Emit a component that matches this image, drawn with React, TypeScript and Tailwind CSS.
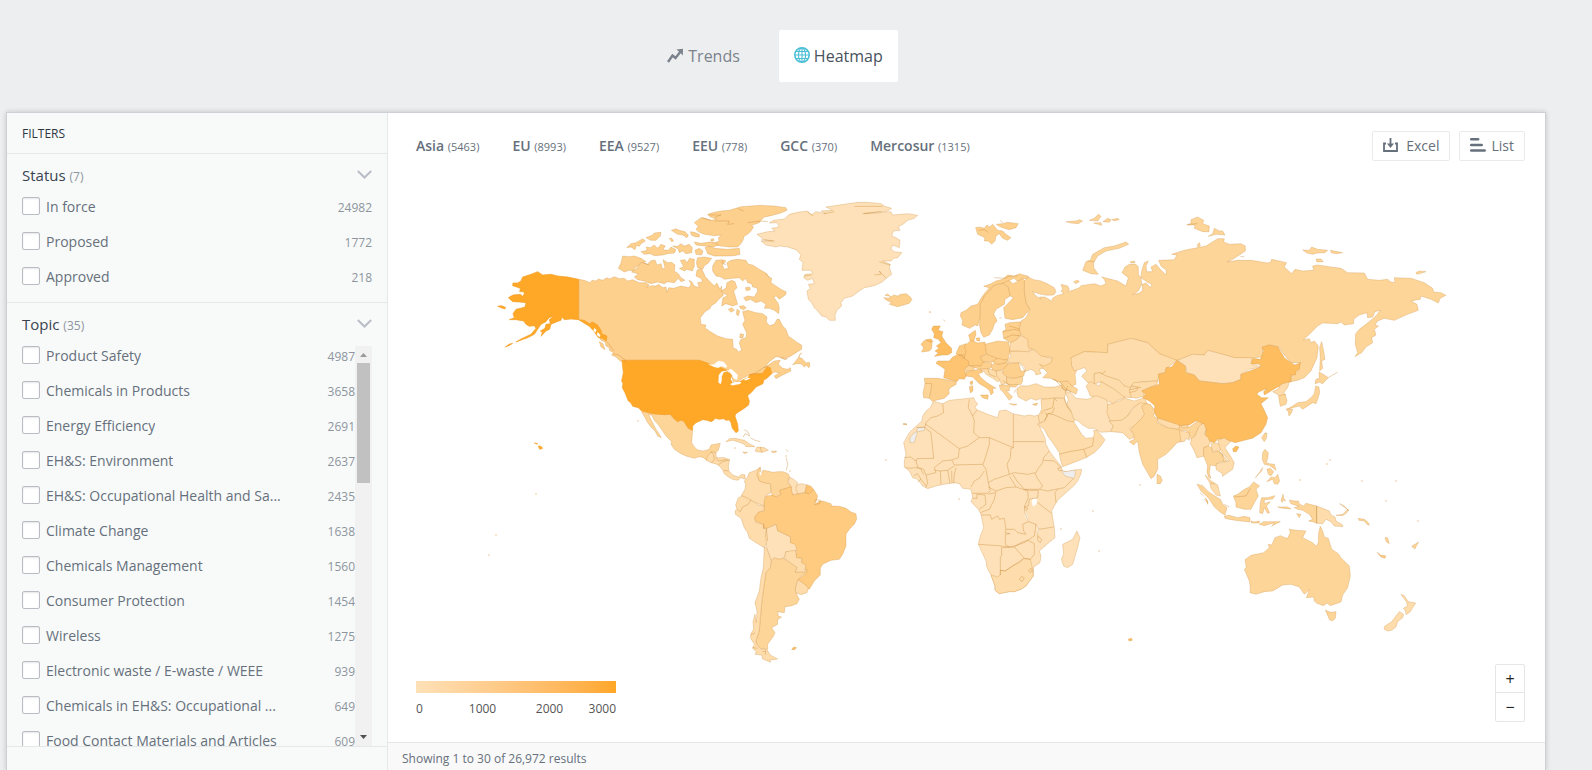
import React, { useState } from 'react';

const REGIONS = [
  { name: 'Asia', count: 5463 },
  { name: 'EU', count: 8993 },
  { name: 'EEA', count: 9527 },
  { name: 'EEU', count: 778 },
  { name: 'GCC', count: 370 },
  { name: 'Mercosur', count: 1315 },
];

interface Option {
  label: string;
  count: number;
}

const STATUSES: Option[] = [
  { label: 'In force', count: 24982 },
  { label: 'Proposed', count: 1772 },
  { label: 'Approved', count: 218 },
];

const TOPICS: Option[] = [
  { label: 'Product Safety', count: 4987 },
  { label: 'Chemicals in Products', count: 3658 },
  { label: 'Energy Efficiency', count: 2691 },
  { label: 'EH&S: Environment', count: 2637 },
  { label: 'EH&S: Occupational Health and Sa...', count: 2435 },
  { label: 'Climate Change', count: 1638 },
  { label: 'Chemicals Management', count: 1560 },
  { label: 'Consumer Protection', count: 1454 },
  { label: 'Wireless', count: 1275 },
  { label: 'Electronic waste / E-waste / WEEE', count: 939 },
  { label: 'Chemicals in EH&S: Occupational ...', count: 649 },
  { label: 'Food Contact Materials and Articles', count: 609 },
];

// heat scale, from few to many regulations
const H0 = '#fee1b8';
const H1 = '#fedcab';
const H2 = '#fed599';
const H3 = '#fed08d';
const H4 = '#fecb80';
const H45 = '#fec472';
const H5 = '#febd5f';
const H6 = '#ffa726';
const NONE = '#eeeeee';
const SEA = '#ffffff';

interface Sheet {
  x: number;
  y: number;
  land: [string, string][];
  borders?: string[];
}

// Every sheet is drawn at three times the map's scale, from its own corner.
const SHEETS: Sheet[] = [
  // North America
  {
    x: 480,
    y: 190,
    land: [
      [H3, '293,265 310,268 327,275 333,268 345,270 352,264 365,268 378,260 386,264 400,257 415,263 430,262 440,270 455,266 475,275 495,275 505,282 497,289 512,284 525,285 533,280 545,290 555,288 558,304 563,290 578,292 600,285 625,290 630,278 624,268 632,272 640,285 655,290 650,275 665,272 660,262 645,255 648,238 660,232 668,245 672,256 690,275 700,285 708,276 717,295 722,285 722,300 728,312 712,326 705,335 690,345 688,352 672,362 658,380 660,400 675,402 672,410 685,420 710,435 735,443 755,445 757,472 766,474 772,483 782,478 775,455 780,445 795,440 797,425 785,400 792,388 788,375 785,362 800,358 825,365 845,368 858,378 856,392 865,404 880,400 888,385 895,385 905,405 915,415 922,435 950,455 962,462 962,475 945,485 925,498 910,500 885,497 865,512 850,530 865,520 880,510 898,508 892,520 905,532 920,535 928,530 930,540 905,552 885,563 880,555 896,545 880,543 872,548 850,550 830,548 805,552 785,562 760,578 752,560 745,540 735,535 700,528 685,520 655,508 435,508 432,517 415,508 405,498 392,492 398,485 385,478 385,470 375,465 372,452 360,448 355,438 345,430 345,420 330,405 310,395 293,385'],
      [H3, '962,485 952,500 935,522 945,518 960,518 970,528 978,522 982,530 987,526 985,514 975,516 972,512 963,502 955,500 955,492'],
      [H3, '640,95 660,80 672,82 690,88 708,84 688,78 680,70 700,64 720,60 745,58 765,52 780,47 810,45 840,43 880,45 915,50 918,58 900,66 870,74 850,78 840,88 835,95 812,103 818,108 810,120 800,130 790,135 785,150 778,160 770,168 745,168 720,165 700,162 680,155 700,155 715,150 712,140 722,132 700,134 670,130 655,124 645,115 652,106'],
      [H3, '672,170 685,165 700,172 740,175 775,172 777,190 760,194 740,195 700,195 680,188 676,178'],
      [H3, '425,195 445,197 460,195 480,202 495,212 478,216 475,222 460,230 458,240 445,238 430,243 412,232 420,216'],
      [H3, '470,228 482,214 500,220 508,210 522,207 528,222 540,218 545,235 552,230 546,206 560,215 572,214 582,222 580,240 592,248 600,260 612,268 600,272 592,262 580,275 560,272 550,278 530,273 510,278 490,270 470,266 460,258 472,248 452,243'],
      [H3, '480,182 498,178 496,168 508,170 520,162 530,172 540,160 553,165 545,176 562,178 570,168 585,176 580,186 560,188 545,192 520,194 508,188 490,190'],
      [H3, '437,170 450,158 465,155 485,143 493,150 480,158 475,166 466,163 462,176 450,168'],
      [H3, '571,118 585,113 595,118 612,122 622,132 618,140 605,132 590,130'],
      [H3, '628,122 640,124 655,130 655,138 642,137 632,133'],
      [H3, '575,165 590,166 600,158 610,165 625,160 634,170 632,185 615,188 605,180 595,185 592,174'],
      [H3, '640,153 660,157 690,153 712,160 700,168 672,165 645,162'],
      [H3, '495,140 515,132 520,126 540,124 538,135 525,148 510,148'],
      [H3, '642,178 655,172 666,180 662,192 645,190'],
      [H3, '598,208 612,206 618,215 626,202 640,205 640,225 634,240 618,235 610,240 595,232 608,228'],
      [H3, '650,200 670,198 692,202 680,218 672,222 665,235 650,230 646,215'],
      [H3, '565,142 572,142 578,150 572,152'],
      [H3, '690,145 698,143 698,150 690,150'],
      [H3, '695,225 705,208 722,206 735,210 724,222 730,235 742,232 738,215 750,208 770,205 795,208 802,220 815,222 835,235 858,248 860,256 872,262 870,275 885,285 902,296 915,302 915,310 905,318 895,325 886,315 878,318 892,338 895,352 893,368 880,358 865,352 850,352 855,340 840,330 825,335 808,325 795,330 788,320 800,315 820,318 830,300 828,290 815,288 812,278 800,275 795,262 785,270 775,260 755,262 730,265 720,258 705,255 695,240'],
      [H3, '720,300 735,292 738,275 752,268 762,272 768,290 758,300 770,340 755,345 735,338 722,345 726,320 740,315'],
      [H3, '742,355 752,350 760,358 750,364'],
      [H3, '775,346 788,344 796,350 788,356 778,352'],
      [H3, '768,355 776,360 772,375 766,370'],
      [H3, '793,290 806,288 808,296 796,299'],
      [H3, '778,428 788,430 786,440 776,440'],
      [H3, '355,452 366,458 372,476 360,468'],
      [H3, '898,500 920,503 912,506'],
      [H2, '482,662 515,668 550,671 568,670 580,685 590,692 600,688 610,692 622,712 635,718 632,755 640,768 650,777 668,780 685,775 690,762 718,757 712,778 705,785 690,783 688,795 676,808 668,800 655,797 640,802 615,795 600,788 580,775 570,760 572,752 555,735 545,720 535,705 520,688 512,672 503,671 512,690 525,715 534,728 541,740 530,735 522,720 510,708 500,695 492,680'],
      [H1, '690,783 705,785 706,800 730,800 746,806 742,825 744,840 755,852 772,858 782,850 792,852 793,865 780,860 770,868 755,865 742,858 730,848 724,835 712,822 702,818 690,815 676,808 680,795'],
      [H1, '735,752 745,743 762,742 790,748 805,758 822,767 795,767 790,760 770,752 755,748'],
      [H1, '822,780 828,768 850,770 862,778 845,784 832,783'],
      [H1, '785,783 800,784 792,788'],
      [H1, '872,780 886,782 875,786'],
      [H6, '423,508 655,508 685,518 705,528 720,530 738,538 724,540 715,552 712,575 718,580 723,568 722,555 728,545 740,542 752,552 748,565 755,575 775,572 800,560 808,550 845,547 858,528 868,530 872,548 860,560 848,568 846,578 825,588 815,600 805,610 808,600 800,615 805,630 803,642 790,652 765,668 762,675 770,700 772,720 765,725 754,712 750,695 745,687 735,688 728,683 715,685 702,682 698,688 690,692 678,688 665,686 645,695 635,705 635,718 622,712 608,690 598,688 590,692 580,684 568,670 550,671 515,668 482,660 472,650 455,646 450,636 442,630 432,605 424,590 426,578 422,570 427,545'],
      [H6, '293,265 293,386 270,384 250,386 243,378 240,388 228,392 210,400 206,415 195,420 180,436 184,424 178,420 192,412 195,400 208,398 205,386 218,376 204,380 195,392 180,400 170,415 160,430 140,440 105,453 120,444 150,430 165,412 160,404 145,406 135,400 128,390 105,386 85,386 100,380 96,368 105,355 118,352 132,348 135,335 115,333 95,332 82,320 96,312 118,310 125,316 130,308 128,302 116,302 118,292 95,284 96,276 110,276 120,270 125,258 150,250 170,242 185,252 210,250 230,255 260,258'],
      [H6, '293,386 310,388 325,398 335,393 350,402 360,418 362,428 378,435 376,450 364,442 352,440 340,422 325,406'],
      [H6, '50,346 62,344 75,350 70,354 60,350'],
      [H6, '73,468 84,460 95,457 84,464'],
      [H6, '172,765 180,766 185,772 176,775'],
      [H6, '160,756 170,758 168,760'],
      [SEA, '683,520 698,521 712,510 728,513 738,525 735,530 722,525 712,530 700,528'],
      [SEA, '714,552 722,542 727,545 722,556 720,578 713,574'],
      [SEA, '742,538 750,534 760,542 770,552 768,566 758,562 752,550'],
      [SEA, '748,580 760,573 780,573 778,578 755,583'],
      [SEA, '790,566 800,560 808,562 795,568'],
      [SEA, '340,412 346,416 344,424 338,420'],
      [SEA, '350,424 358,432 356,438 348,432'],
    ],
    borders: [
      '376,452 386,462 392,472 400,480',
      '395,488 412,492 430,505 436,515',
      '805,552 825,545 848,530 862,525',
      '705,800 712,810 735,806 746,808',
      '690,783 698,790 700,806 692,815',
      '712,822 725,812 740,808',
      '728,838 742,840',
      '790,716 800,722 806,735 792,728 787,738',
      '808,740 822,748 838,752',
      '838,768 842,784',
      '682,72 720,72 700,80',
      '700,90 745,90 740,100 760,98',
      '800,95 840,90 860,92',
      '662,80 690,88',
      '770,52 788,60',
      '735,222 722,215 728,206',
      '486,215 505,222',
      '855,250 866,258',
      '915,775 922,783',
    ],
  },
  // Greenland and Iceland
  {
    x: 700,
    y: 190,
    land: [
      [H0, '168,130 200,122 222,120 212,112 235,108 228,95 205,96 218,88 250,84 265,70 290,64 320,60 330,72 345,62 375,68 360,60 395,58 375,48 430,40 470,34 500,34 540,38 552,46 572,52 560,60 490,68 530,66 570,62 575,72 600,70 620,68 650,73 640,82 620,88 610,97 592,108 597,118 577,120 572,135 585,140 597,148 595,170 575,162 570,174 580,182 603,185 590,200 578,202 570,210 545,210 568,220 565,228 572,250 556,262 545,272 520,284 490,290 475,300 455,315 430,322 420,335 422,345 408,358 402,372 403,388 385,388 375,378 362,375 350,360 340,350 332,335 322,325 318,300 328,292 322,280 340,278 335,262 320,268 308,260 312,250 335,248 330,238 303,238 306,215 295,205 300,192 285,176 260,168 235,165 225,168 195,162 180,150 220,150 190,146'],
      [H3, '548,320 565,322 568,316 552,313 560,309 570,318 578,312 590,315 600,310 615,308 625,315 633,325 625,337 608,342 590,347 565,340 572,332 560,330'],
      [H3, '824,110 835,108 850,112 858,102 866,108 875,100 890,118 905,120 915,130 930,140 920,148 905,142 895,128 885,135 882,150 872,160 862,150 850,150 852,140 830,130'],
      [H3, '886,100 905,98 920,94 952,98 945,110 925,116 905,110 895,106'],
      [H2, '606,700 614,698 618,702'],
    ],
    borders: ['730,718 738,730 752,738', '535,212 552,218 568,222', '520,252 540,250 535,240 556,262', '310,255 332,252', '320,64 338,75', '484,68 540,62', '370,68 400,62', '832,118 850,116 862,124', '898,88 906,96', '460,46 545,46', '180,146 214,150'],
  },
  // South America
  {
    x: 600,
    y: 430,
    land: [
      [H1, '430,150 438,142 445,125 465,118 478,108 476,118 468,130 475,150 492,155 508,158 510,185 492,195 494,210 490,225 455,212 436,200 420,195 432,175 434,160'],
      [H2, '478,110 480,130 486,118 500,120 515,124 530,122 545,122 555,125 563,130 566,140 560,150 572,170 552,173 537,178 540,190 525,198 513,194 508,158 490,155 475,150 468,130 472,118'],
      [H0, '566,138 578,145 590,155 585,170 592,188 575,192 570,178 572,168 562,155'],
      [H0, '590,160 604,158 617,162 612,185 590,188 585,172'],
      [H45, '617,161 630,166 638,176 625,188 612,186'],
      [H1, '412,200 425,195 450,207 440,222 425,228 418,243 408,235 404,222'],
      [H1, '403,238 410,236 418,243 425,228 440,222 450,207 472,222 490,225 490,238 472,244 461,260 465,275 488,280 487,292 498,292 494,310 500,330 490,350 465,335 445,322 440,305 430,290 420,262 403,250'],
      [H4, '495,195 513,193 528,198 540,190 536,178 555,172 570,167 572,180 575,192 590,189 612,186 625,188 638,175 650,195 645,212 640,222 655,210 665,210 690,218 692,225 715,226 735,232 750,243 765,248 767,265 760,280 745,295 735,310 735,345 725,370 715,385 690,388 665,400 658,412 658,432 640,450 625,475 615,468 600,452 590,445 605,435 617,425 612,410 602,395 602,382 585,380 587,350 568,335 568,318 548,308 530,300 525,280 500,292 487,292 488,280 465,272 461,260 472,244 490,240 490,210'],
      [H0, '498,292 525,280 530,300 548,308 568,318 568,335 582,340 587,352 583,362 555,362 548,382 535,385 520,380 510,388 504,370 497,350 494,310'],
      [H1, '555,362 583,358 587,380 602,382 602,395 615,402 610,424 582,424 588,410 550,382'],
      [H1, '590,447 605,455 622,470 618,485 600,491 585,486 582,475'],
      [H2, '512,388 520,382 535,385 548,382 588,410 582,424 610,424 618,415 617,425 600,435 588,450 582,478 588,492 595,505 588,518 570,525 552,527 550,545 530,542 532,556 542,558 530,566 530,580 512,590 522,605 518,615 500,640 500,655 478,652 468,640 465,630 475,600 478,560 484,500 490,460 495,425 508,410'],
      [H1, '490,348 497,352 504,370 510,388 508,410 495,425 490,460 484,500 478,560 475,600 465,630 468,642 480,654 498,656 508,672 530,684 505,688 510,694 485,684 482,672 462,670 466,662 455,652 460,640 448,620 452,604 458,595 456,572 462,550 466,575 468,540 462,515 475,480 480,440 487,410'],
      [H5, '572,656 578,648 587,650 580,656'],
      [SEA, '476,124 481,124 480,132 477,132'],
    ],
    borders: ['638,212 645,206 658,208 656,218 642,220', '496,294 500,330', '485,662 495,660 492,672', '556,80 560,100 556,118', '520,60 528,62', '448,612 462,606', '454,650 470,652', '488,280 490,292'],
  },
  // Africa
  {
    x: 880,
    y: 260,
    land: [
      [H0, '155,425 162,422 185,428 205,418 235,415 278,410 282,420 290,428 282,440 290,447 320,460 350,470 355,450 375,447 395,458 430,465 445,462 460,465 472,462 476,480 472,488 480,505 492,530 495,550 505,570 520,590 540,615 545,630 560,632 582,627 602,625 600,638 590,660 578,675 555,695 530,718 520,735 512,750 515,770 520,800 522,830 500,848 475,870 480,885 477,905 458,918 457,945 435,975 420,985 400,992 385,992 355,998 342,988 342,975 330,942 318,920 315,900 292,850 298,825 308,800 300,760 292,745 270,722 275,710 270,685 245,682 235,668 220,665 190,670 165,675 140,683 125,675 110,655 95,650 85,630 70,618 70,600 75,580 68,545 85,515 100,500 123,480 125,465 135,450 148,440'],
      [H1, '330,942 350,948 358,942 358,928 372,930 395,915 415,905 428,893 448,895 454,920 457,945 435,975 420,985 400,992 385,992 355,998 342,988 342,975'],
      [H0, '588,810 597,830 590,860 575,910 560,920 548,915 541,895 548,880 545,850 575,835'],
      [NONE, '540,628 552,632 583,627 582,645 578,652 552,645'],
      [NONE, '87,545 87,530 100,515 108,512 108,500 132,500 130,508 110,512 104,530 100,545'],
      [SEA, '452,718 460,712 468,715 466,730 456,736'],
      [SEA, '432,750 438,765 442,782 434,768'],
      [SEA, '468,792 474,800 472,822 470,810'],
    ],
    borders: [
      '185,428 188,455 170,465 150,470 135,485 132,498 108,500',
      '265,415 262,440 275,465 280,480 278,515 295,530',
      '132,488 235,563 260,555 295,530 325,530',
      '275,465 288,447',
      '150,515 158,592 108,593 105,600 88,588 70,590',
      '150,515 132,500',
      '235,563 232,590 212,597 185,600 160,620 165,635 135,642 128,625 110,620 105,598',
      '212,597 220,612 305,610 310,600 325,550 325,530 397,560 397,458',
      '397,542 490,542',
      '397,560 390,562 388,590 378,610 385,640 340,655 322,665 315,625 305,610',
      '385,640 400,635 440,640 465,635 470,625 485,605 488,590 505,570',
      '395,640 408,660 430,685 475,685 485,675 468,650 462,637',
      '475,685 500,690 525,685 550,680 578,652',
      '488,598 520,600 540,620 530,622 535,630 540,628',
      '430,685 445,688 472,688 470,710 445,715 442,735 430,738',
      '470,725 512,757',
      '525,725 522,695 530,685',
      '218,668 220,640 225,620',
      '180,670 178,630 200,628 207,668',
      '160,628 178,630',
      '200,628 220,615',
      '213,665 212,630',
      '135,680 140,665 135,642',
      '72,620 90,622 100,620 118,622 128,640',
      '98,645 110,638 120,655 110,662',
      '120,655 135,675',
      '270,678 280,660 295,652 310,630',
      '275,697 320,697 328,690 322,665',
      '322,678 345,690 375,680 405,678 385,645',
      '275,712 288,712 288,700 312,702 315,730 295,745',
      '345,690 340,715 325,745 298,755',
      '322,700 342,695',
      '405,678 440,690 442,710 430,738 432,755 442,782 425,790 428,810 435,820 410,815 400,805 375,805 370,772 355,775 350,765 332,775 328,762 300,762',
      '442,782 465,790 475,805 518,798',
      '375,805 372,815 387,818 373,820 373,850 385,858',
      '292,850 350,854 385,858 400,855 430,845 460,825 465,790',
      '470,825 482,835 478,845 470,838 472,800',
      '362,858 362,885 358,888 358,942',
      '365,860 400,858 415,875 430,892 448,895 460,880 460,848 440,838 420,845 400,858',
      '358,928 372,930 395,915 428,893',
      '430,740 440,742 436,750',
      '415,955 422,946 430,952 423,962 415,955',
      '443,928 450,922 454,930 447,934 443,928',
    ],
  },
  // Europe and the Middle East
  {
    x: 880,
    y: 260,
    land: [
      [H3, '240,155 255,148 270,135 290,130 300,112 310,98 325,80 308,76 330,68 345,60 365,55 380,42 400,46 415,38 442,46 440,54 425,52 410,62 400,52 385,58 365,68 350,70 335,75 328,88 310,105 305,118 298,130 298,165 290,195 283,192 265,202 243,192 245,178 238,165'],
      [H3, '298,130 305,118 310,105 328,88 335,76 350,70 365,68 382,78 388,105 372,115 370,130 345,145 338,160 345,172 348,180 340,190 335,205 325,222 308,229 300,215 295,190 298,165'],
      [H3, '365,66 385,58 395,68 410,62 425,52 432,60 430,90 435,125 447,145 425,170 395,176 372,172 368,140 380,128 390,118 397,110 388,105 382,78'],
      [H4, '263,222 283,208 285,220 280,235 278,244 268,240'],
      [H4, '285,232 296,230 296,240 288,240'],
      [H5, '157,195 178,195 172,208 186,212 182,225 195,245 212,262 212,275 200,282 185,282 160,286 172,276 162,270 174,262 166,255 180,245 172,235 158,230 160,218 152,205'],
      [H5, '134,236 150,234 156,242 145,246'],
      [H4, '120,250 128,240 135,238 153,245 152,262 145,270 122,273 128,260'],
      [H45, '190,300 205,300 215,288 232,280 250,292 266,300 262,315 250,325 256,345 250,355 235,353 228,362 188,350 192,325 165,307 170,300'],
      [H4, '225,278 235,255 255,248 258,270 250,292 235,282'],
      [H4, '250,255 262,245 270,238 290,246 312,243 317,278 297,288 310,302 302,315 265,315 262,300 250,292 255,270'],
      [H3, '312,250 350,240 382,243 388,270 380,297 365,297 345,292 317,280'],
      [H3, '130,352 170,352 190,355 225,362 226,370 208,380 203,388 205,398 190,412 165,418 155,422 145,412 150,385 152,370 132,368'],
      [H2, '132,368 152,368 150,385 145,412 128,410 126,395'],
      [H3, '298,288 317,280 348,292 338,302 305,302'],
      [H3, '265,318 282,313 300,316 305,304 332,305 332,318 322,324 300,324 280,320'],
      [H2, '250,325 262,314 280,318 278,328 255,330'],
      [H4, '255,332 278,328 300,324 305,334 292,338 300,350 318,365 345,382 335,382 337,395 330,402 325,388 312,378 295,368 275,348 255,345'],
      [H4, '298,402 322,402 320,415 305,410'],
      [H4, '265,377 275,374 276,390 268,396'],
      [H45, '268,362 275,360 274,370 268,370'],
      [H3, '330,315 340,306 352,310 378,304 382,312 366,325 348,330 335,326'],
      [H3, '335,302 348,292 380,298 378,304 352,310'],
      [H1, '300,328 320,322 345,330 350,345 358,358 350,362 335,352 315,340 310,332'],
      [H1, '345,330 362,328 368,338 378,348 378,365 362,372 355,355 348,345'],
      [H3, '366,325 382,308 412,305 420,330 432,330 428,345 400,352 378,348 366,338'],
      [H2, '376,350 400,352 425,346 425,360 420,370 395,374 378,368'],
      [H2, '355,372 378,372 410,370 405,378 385,378 385,390 375,388 395,408 385,418 375,405 368,395 358,385'],
      [H2, '385,428 408,430 400,433'],
      [H1, '380,297 390,285 386,270 410,270 440,272 455,266 470,268 485,285 515,293 510,312 492,320 475,325 480,338 465,342 462,332 450,325 432,332 432,318 415,305 382,306'],
      [H1, '386,270 388,245 408,235 418,224 445,232 448,250 458,262 440,272 410,270'],
      [H3, '372,190 385,185 425,182 415,195 420,220 408,235 388,245 368,232 365,212 375,205'],
      [H1, '408,382 420,374 440,375 465,368 490,378 520,378 545,372 558,382 550,412 520,410 500,415 480,412 465,418 450,412 435,420 412,408 408,395'],
      [H4, '455,430 470,426 465,434'],
      [H2, '515,355 540,358 570,362 570,372 590,385 585,400 570,392 548,385 538,365'],
      [H1, '480,415 520,412 550,412 556,430 575,455 582,475 578,484 560,480 520,462 500,458 492,480 476,486 472,465 482,445'],
      [H1, '470,490 492,480 500,458 520,462 560,480 578,482 590,500 602,520 615,532 635,530 640,520 638,508 648,508 672,536 660,555 640,575 615,590 590,600 545,617 538,595 535,575 515,545 500,525 490,505'],
    ],
    borders: [
      '520,412 515,440 490,448 480,458',
      '520,412 528,420',
      '550,412 560,440 578,460',
      '492,455 500,465 490,478',
      '498,460 515,455 520,440',
      '535,580 565,572 608,565 618,590',
      '608,565 635,555 638,530',
      '365,212 400,205 420,210',
      '368,232 395,222 418,224',
      '385,195 420,205',
      '250,292 240,280',
      '232,282 250,282',
      '320,322 325,340 345,348',
      '365,358 385,372',
      '540,365 555,385 570,392',
      '412,305 425,318 432,330',
      '188,176 192,182',
      '145,152 149,155',
      '66,488 78,489',
      '405,385 400,395',
      '340,50 372,52 384,46 410,44',
      '355,172 362,170',
    ],
  },
  // Russia, Central Asia, China and Japan
  {
    x: 1050,
    y: 190,
    land: [
      [H2, '-80,270 -68,258 -52,266 -30,270 -8,280 10,290 15,302 8,312 -10,313 -30,310 -55,302 -45,315 -30,325 -35,318 -18,318 2,330 5,322 15,315 38,308 30,300 35,295 30,280 50,285 55,295 50,302 65,298 85,290 90,284 130,278 150,285 165,278 160,265 152,258 180,265 200,270 225,285 232,260 213,245 222,228 235,220 255,220 262,228 262,250 270,260 272,280 262,300 245,311 265,306 275,298 273,280 285,276 300,290 302,280 290,274 270,260 272,240 280,215 292,210 285,225 287,242 305,242 300,228 315,220 328,235 345,252 346,238 330,225 323,208 370,206 378,192 362,190 400,178 430,172 465,165 500,143 520,143 518,153 535,160 570,158 583,165 583,180 565,192 545,205 528,213 560,208 600,208 650,216 660,213 662,205 707,215 700,228 722,248 732,235 755,240 788,238 785,225 800,222 840,228 870,232 890,245 940,246 950,265 985,268 1010,265 1018,272 1032,275 1030,260 1080,262 1120,275 1145,292 1148,303 1170,305 1185,313 1168,322 1162,336 1140,325 1110,315 1108,325 1080,330 1098,340 1102,358 1070,370 1030,388 1000,382 980,390 972,402 983,405 970,415 975,432 962,440 965,455 945,468 932,485 912,497 920,485 913,460 914,428 925,415 945,400 975,375 988,358 972,362 965,378 950,380 948,365 925,372 908,385 908,398 880,402 870,393 860,398 815,396 800,405 780,425 757,447 775,443 780,455 790,450 802,465 798,500 780,540 760,560 740,568 720,572 722,550 740,540 748,515 720,515 700,492 685,468 655,462 635,470 635,497 600,502 550,500 515,490 470,478 460,492 425,490 378,508 350,500 325,488 290,455 240,442 170,460 170,485 100,482 60,500 65,530 78,535 72,550 75,580 62,585 50,570 25,572 -2,562 -25,560 -10,545 -35,520 -20,525 0,515 5,500 -30,495 -50,476 -68,470 -70,445 -90,432 -95,415 -90,390 -75,380 -63,355 -75,335 -80,300'],
      [H2, '95,238 105,212 118,208 125,190 160,170 190,165 225,153 233,160 205,172 165,180 140,195 128,215 128,230 142,250 120,248'],
      [H2, '407,102 420,98 420,86 440,78 458,88 455,98 475,105 474,122 455,122 430,112 432,102'],
      [H2, '472,136 485,128 490,112 505,120 515,120 522,132 495,130'],
      [H2, '755,177 775,178 782,168 800,175 830,178 822,185 800,186 785,190 768,186'],
      [H2, '838,178 855,181 875,185 858,188 842,186'],
      [H2, '795,204 810,204 817,212 798,213'],
      [H2, '1095,245 1105,240 1125,242 1112,246 1098,250'],
      [H2, '115,88 130,82 142,70 150,76 140,90'],
      [H2, '45,92 75,90 85,86 95,90 82,98 60,96'],
      [H2, '156,92 170,82 180,86 175,94'],
      [H2, '182,86 200,82 205,86 190,89'],
      [H2, '128,96 150,95 152,103'],
      [H2, '238,212 250,210 252,215 240,216'],
      [H2, '68,272 80,267 85,272 74,278'],
      [H2, '440,160 446,155 448,165 440,168'],
      [H2, '806,470 812,452 818,480 822,505 812,510 815,532 806,540 808,500'],
      [H1, '60,500 100,482 170,485 170,460 240,442 290,455 325,488 378,508 350,530 343,545 325,548 320,570 270,572 240,585 235,597 220,585 205,568 165,555 148,545 130,548 130,580 110,575 92,555 108,540 100,530 70,540 62,525'],
      [H1, '130,548 148,545 165,555 205,568 220,585 240,590 270,588 275,605 240,620 215,618 190,595 150,572 130,580'],
      [H1, '105,585 118,572 145,585 150,572 190,595 222,620 200,628 185,638 165,628 118,615 112,600'],
      [H1, '235,597 248,575 320,570 318,580 275,598 280,615 255,622 240,618'],
      [H0, '380,508 425,490 460,492 470,478 515,490 550,500 600,500 605,520 630,528 595,535 570,550 570,565 545,575 515,578 445,570 430,552 408,545 403,525'],
      [H0, '42,602 60,605 75,622 110,625 135,614 165,625 172,640 170,660 175,690 187,705 178,722 150,724 130,712 112,712 92,700 82,690 68,685 60,660 48,640 52,625'],
      [H1, '170,640 185,638 222,622 250,630 280,620 290,640 262,640 245,650 230,675 212,688 178,690 168,665'],
      [H1, '175,690 212,688 230,675 250,648 268,635 298,642 285,668 250,705 236,712 252,738 235,745 215,725 180,722 187,705'],
      [H5, '378,508 403,525 405,545 430,552 445,570 515,578 545,575 570,565 570,550 595,540 630,528 625,520 600,518 605,502 628,505 638,480 633,468 655,462 682,468 700,500 720,515 732,522 748,515 745,535 735,540 733,552 720,552 720,572 700,580 680,588 660,600 640,612 638,602 648,592 622,604 618,610 632,620 652,620 630,638 640,658 650,680 645,700 630,725 605,742 580,748 553,755 530,748 520,743 500,745 490,755 478,752 462,740 465,712 455,698 435,690 415,702 385,705 345,695 318,680 308,660 312,645 295,630 275,620 283,610 272,600 300,588 325,580 322,550 342,545 345,530 362,528'],
      [H2, '804,543 820,552 832,560 815,578 805,574 792,578 795,565 805,562'],
      [H2, '794,585 804,588 806,605 800,625 795,638 785,635 770,645 755,655 745,645 708,655 725,645 740,635 765,632 780,620 790,608'],
      [H2, '705,654 725,655 720,668 714,675 712,662'],
      [H1, '665,602 680,595 690,580 715,572 710,590 698,605 705,612 685,615 676,608'],
      [H2, '683,615 702,610 708,628 705,640 688,646 686,635'],
    ],
    borders: ['832,560 845,552 860,544', '235,597 262,590 255,600 235,605', '240,585 270,590', '110,210 130,212', '410,100 440,98', '150,550 165,540', '30,590 45,600 50,585', '10,565 35,590', '640,730 645,725', '568,196 580,198'],
  },
  // South and South-East Asia, Oceania
  {
    x: 1120,
    y: 400,
    land: [
      [H2, '62,15 75,8 88,10 102,30 98,45 110,55 108,65 135,78 172,85 178,72 205,78 232,60 248,70 232,80 222,105 210,115 205,100 195,88 178,88 180,122 168,125 155,140 135,160 110,175 110,205 100,225 90,233 78,212 65,190 55,155 50,120 38,132 25,122 40,115 38,98 28,85 62,52 70,40'],
      [H1, '108,52 120,54 175,72 175,85 140,80 112,65'],
      [H1, '180,74 200,72 200,80 182,80'],
      [H1, '175,88 205,95 205,118 195,112 190,122 180,122'],
      [H1, '240,70 250,68 255,85 250,100 262,110 268,125 262,135 248,140 250,165 228,170 220,150 208,128 212,112 222,105 232,80'],
      [H2, '248,140 262,135 272,140 275,155 290,150 305,160 310,180 290,185 285,195 268,192 265,218 270,232 262,228 258,210 260,195 248,165'],
      [H1, '270,128 285,125 305,135 295,150 310,168 320,180 308,182 305,162 290,150 275,152'],
      [H1, '290,118 310,110 328,122 312,140 325,160 340,185 335,205 305,226 304,218 285,205 286,188 325,180 300,150'],
      [H1, '252,222 268,238 290,252 298,285 285,282 270,262 266,245'],
      [H2, '108,220 118,225 124,238 118,248 108,248'],
      [H2, '430,98 438,96 436,112 430,122 422,110'],
      [H5, '335,143 345,135 354,138 346,152 337,152'],
      [H2, '228,250 245,254 262,272 290,290 298,295 305,310 318,320 312,342 300,335 280,318 262,290 240,270'],
      [H2, '310,345 325,343 350,350 370,346 387,350 387,363 360,360 330,356 312,352'],
      [H2, '390,360 400,363 415,360 415,366 392,366'],
      [H2, '415,370 428,362 458,362 478,362 458,372 452,376 460,365 430,374'],
      [H2, '337,285 350,280 370,265 385,258 398,243 416,255 405,265 412,285 400,305 390,325 370,325 345,318 345,305'],
      [H2, '418,305 422,290 440,290 462,284 455,294 430,296 430,308 448,302 436,315 446,335 440,337 430,320 425,338 416,335'],
      [H2, '480,300 486,280 488,292 494,300 486,296 484,304'],
      [H2, '470,318 500,318 510,324 485,322'],
      [H2, '527,338 540,340 535,350'],
      [H2, '425,155 432,145 442,155 440,172 436,185 445,188 460,190 465,208 455,200 445,193 430,190 424,175'],
      [H2, '438,205 448,202 458,212 450,224 442,220'],
      [H2, '438,242 450,228 462,230 470,220 476,240 470,250 460,248 455,235'],
      [H2, '403,230 415,215 425,200 422,210'],
      [H2, '253,290 260,300 260,310'],
      [H2, '505,297 520,300 532,300 536,310 548,315 555,307 587,315 587,367 575,362 563,360 575,355 565,340 545,328 530,325 520,320 534,316 510,308'],
      [H1, '587,315 605,322 625,330 630,342 642,348 645,360 665,372 665,377 640,375 630,362 615,355 605,368 587,367'],
      [H1, '645,343 665,340 675,330 682,325 678,335 665,344'],
      [H1, '656,308 670,315 684,330 672,320'],
      [H2, '712,352 730,355 742,365 745,373 738,370 730,360 714,358'],
      [H2, '792,410 800,410 805,428 796,422'],
      [H4, '768,454 780,463 794,464 792,472 780,468'],
      [H2, '872,436 882,430 893,423 886,435 882,444'],
      [H2, '372,476 390,463 405,460 428,455 445,440 442,430 452,432 462,410 478,404 492,410 500,412 508,395 505,385 525,388 555,390 545,410 575,425 586,436 592,425 593,395 598,376 605,390 610,408 622,412 632,445 652,458 660,470 685,495 688,525 680,560 665,582 660,603 640,610 628,614 618,606 608,614 588,607 580,600 578,588 556,590 565,566 550,580 535,558 510,550 485,552 472,560 455,570 430,572 405,580 387,575 388,560 385,540 370,505 376,500'],
      [H2, '613,627 628,634 645,632 643,652 635,659 626,657'],
      [H1, '840,580 850,584 862,602 884,606 875,620 868,632 856,641 852,628 847,622 860,615 856,602'],
      [H1, '835,632 848,640 845,650 830,662 825,678 812,688 800,690 789,684 792,675 812,662 825,645'],
      [H5, '22,714 32,712 34,718 24,720'],
    ],
    borders: ['340,288 375,285 388,262', '268,245 282,250', '587,315 587,367', '237,275 248,285', '250,295 262,305', '310,310 325,318'],
  },
];

// atolls and tiny islands, on the map's own scale
const DOTS = ['495,534', '488,554', '535,493', '885,459', '1098,550', '1092,510', '1060,528', '1139,484', '1326,463', '1329,459', '1299,479', '1361,480', '1395,480', '1385,500', '1417,520', '637,420', '734,447', '785,455', '789,470', '958,498', '929,311'];

function WorldMap() {
  return (
    <svg viewBox="387 177 1157 564" className="block w-full" role="img" aria-label="Regulations by country">
      {SHEETS.map((sheet, i) => (
        <g key={i} transform={`translate(${sheet.x} ${sheet.y}) scale(0.3333)`} strokeLinejoin="round">
          {sheet.land.map(([fill, points], j) => (
            <polygon
              key={j}
              points={points}
              fill={fill}
              stroke={fill === SEA ? '#ffffff' : fill === H6 ? '#f3a02a' : '#c88c3c'}
              strokeOpacity={fill === H6 ? 1 : 0.45}
              strokeWidth={2}
            />
          ))}
          {(sheet.borders || []).map((points, j) => (
            <polyline key={j} points={points} fill="none" stroke="#c88c3c" strokeOpacity={0.5} strokeWidth={2.4} />
          ))}
        </g>
      ))}
      {DOTS.map(dot => {
        const [x, y] = dot.split(',');
        return <circle key={dot} cx={x} cy={y} r={0.7} fill="#e5b980" />;
      })}
    </svg>
  );
}

function FilterRow({ label, count }: Option) {
  return (
    <li className="flex h-[35px] items-start">
      <label className="flex min-w-0 flex-1 items-start gap-[6px] text-sm text-[#66707c]">
        <input
          type="checkbox"
          className="size-[18px] shrink-0 appearance-none rounded-[2px] border border-[#b9bdc3] bg-white shadow-[inset_0_1px_2px_rgba(0,0,0,0.1)] checked:bg-[#4fc3d9]"
        />
        <span className="truncate leading-5">{label}</span>
      </label>
      <span className="text-xs leading-[22px] text-[#8d959e]">{count}</span>
    </li>
  );
}

function FilterHeader({ title, count }: { title: string; count: number }) {
  return (
    <button type="button" className="flex h-[43px] w-full items-center justify-between pr-[15px] text-left">
      <span className="text-[15px] text-[#38434f]">
        {title} <span className="text-xs text-[#8d959e]">({count})</span>
      </span>
      <svg viewBox="0 0 15 9" className="mb-0.5 h-[9px] w-[15px]" fill="none" stroke="#b9bdc5" strokeWidth="2">
        <path d="M.8 1l6.700 6.500L14.200 1" />
      </svg>
    </button>
  );
}

export default function App() {
  const [tab, setTab] = useState('heatmap');

  const tabClass = (name: string) =>
    `flex h-[52px] items-center gap-1 rounded-[2px] px-[15px] text-base ${
      tab === name ? 'bg-white text-[#47525d]' : 'text-[#7b838c]'
    }`;

  return (
    <div className="flex min-h-screen flex-col bg-[#edeef0] pr-[46px] pl-[6px] font-['Open_Sans',sans-serif]">
      <nav className="flex h-[112px] shrink-0 items-start justify-center gap-6 pt-[30px] pr-0.5">
        <button type="button" onClick={() => setTab('trends')} className={tabClass('trends')}>
          <svg viewBox="0 0 17 15" className="mb-0.5 h-[15px] w-[17px]" fill="none" stroke="#7b838c" strokeWidth="2.4">
            <path d="M1 14l4.500-6.500 3 2.500 5.500-7" />
            <path d="M9.500 1.400L16 .8l-.2 6.800L13.500 5z" fill="#7b838c" stroke="none" />
          </svg>
          Trends
        </button>
        <button type="button" onClick={() => setTab('heatmap')} className={tabClass('heatmap')}>
          <svg viewBox="0 0 16 16" className="mb-0.5 size-4" fill="none" stroke="#4bbfd6" strokeWidth="1.1">
            <circle cx="8" cy="8" r="7.200" strokeWidth="1.6" />
            <ellipse cx="8" cy="8" rx="3.500" ry="7" />
            <path d="M8 1v14M1 8h14M2 4.500h12M2 11.500h12" />
          </svg>
          Heatmap
        </button>
      </nav>

      <div className="flex flex-1 border border-b-0 border-[#cdd0d4] bg-white shadow-[0_0_5px_rgba(0,0,0,0.18)]">
        <aside className="w-[381px] shrink-0 border-r border-[#e6e8e8] bg-[#f8faf9]">
          <h2 className="flex h-[41px] items-center border-b border-[#e6e8e8] pt-0.5 pl-[15px] text-xs text-[#2c3742]">FILTERS</h2>
          <section className="border-b border-[#e6e8e8] pl-[15px]">
            <FilterHeader title="Status" count={7} />
            <ul className="pr-[15px]">
              {STATUSES.map(option => (
                <FilterRow key={option.label} {...option} />
              ))}
            </ul>
          </section>
          <section className="border-b border-[#e6e8e8] pl-[15px]">
            <FilterHeader title="Topic" count={35} />
            <div className="flex h-[400px] overflow-hidden pr-[15px]">
              <ul className="min-w-0 flex-1">
                {TOPICS.map(option => (
                  <FilterRow key={option.label} {...option} />
                ))}
              </ul>
              <div className="flex w-[17px] flex-col items-center bg-[#f1f1f1]">
                <svg viewBox="0 0 17 17" className="size-[17px]">
                  <path d="M5 11l3.500-4 3.500 4z" fill="#9a9a9a" />
                </svg>
                <div className="h-[120px] w-[13px] bg-[#c1c1c1]" />
                <svg viewBox="0 0 17 17" className="mt-auto size-[17px]">
                  <path d="M5 6l3.500 4 3.500-4z" fill="#505050" />
                </svg>
              </div>
            </div>
          </section>
        </aside>

        <main className="flex min-w-0 flex-1 flex-col">
          <div className="flex h-[65px] items-center justify-between pr-5 pl-7">
            <div className="flex items-baseline gap-[33px]">
              {REGIONS.map(region => (
                <a key={region.name} href="#" className="text-sm font-semibold text-[#66707c]">
                  {region.name} <span className="text-[11px] font-normal">({region.count})</span>
                </a>
              ))}
            </div>
            <div className="flex gap-[9px] text-sm text-[#66707c]">
              <button type="button" className="flex h-[30px] items-center gap-2 rounded-[2px] border border-[#e9eaec] px-[10px]">
                <svg viewBox="0 0 15 14" className="mb-0.5 h-[14px] w-[15px]" fill="none" stroke="#66707c" strokeWidth="1.8">
                  <path d="M3 5.500H1v7.500h13V5.500h-2" />
                  <path d="M7.500 0v7" />
                  <path d="M4 5.500h7L7.500 10z" fill="#66707c" stroke="none" />
                </svg>
                Excel
              </button>
              <button type="button" className="flex h-[30px] items-center gap-[5px] rounded-[2px] border border-[#e9eaec] px-[10px]">
                <svg viewBox="0 0 16 14" className="mb-0.5 h-[14px] w-4" stroke="#66707c" strokeWidth="2.500" strokeLinecap="round">
                  <path d="M1.200 1.300h7M1.200 7h10.500M1.200 12.600h13.500" />
                </svg>
                List
              </button>
            </div>
          </div>

          <div className="relative">
            <WorldMap />
            <div className="absolute bottom-[25px] left-7 w-[200px]">
              <div className="h-3 bg-linear-to-r from-[#fee1b8] to-[#ffa726]" />
              <div className="mt-2 flex text-xs leading-4 text-[#555]">
                <span className="w-[33px]">0</span>
                <span className="w-[67px] text-center">1000</span>
                <span className="w-[67px] text-center">2000</span>
                <span className="w-[33px] text-right">3000</span>
              </div>
            </div>
            <div className="absolute right-5 bottom-5 flex w-[30px] flex-col rounded-[2px] border border-[#e6e6e6] bg-white text-base text-[#222]">
              <button type="button" aria-label="Zoom in" className="h-7 border-b border-[#e6e6e6] leading-7">+</button>
              <button type="button" aria-label="Zoom out" className="h-7 leading-7">−</button>
            </div>
          </div>

          <footer className="flex-1 border-t border-[#e6e8e8] bg-[#f9f9f9] px-[14px] pt-[7px] text-xs leading-[18px] text-[#66707c]">
            Showing 1 to 30 of 26,972 results
          </footer>
        </main>
      </div>
    </div>
  );
}
